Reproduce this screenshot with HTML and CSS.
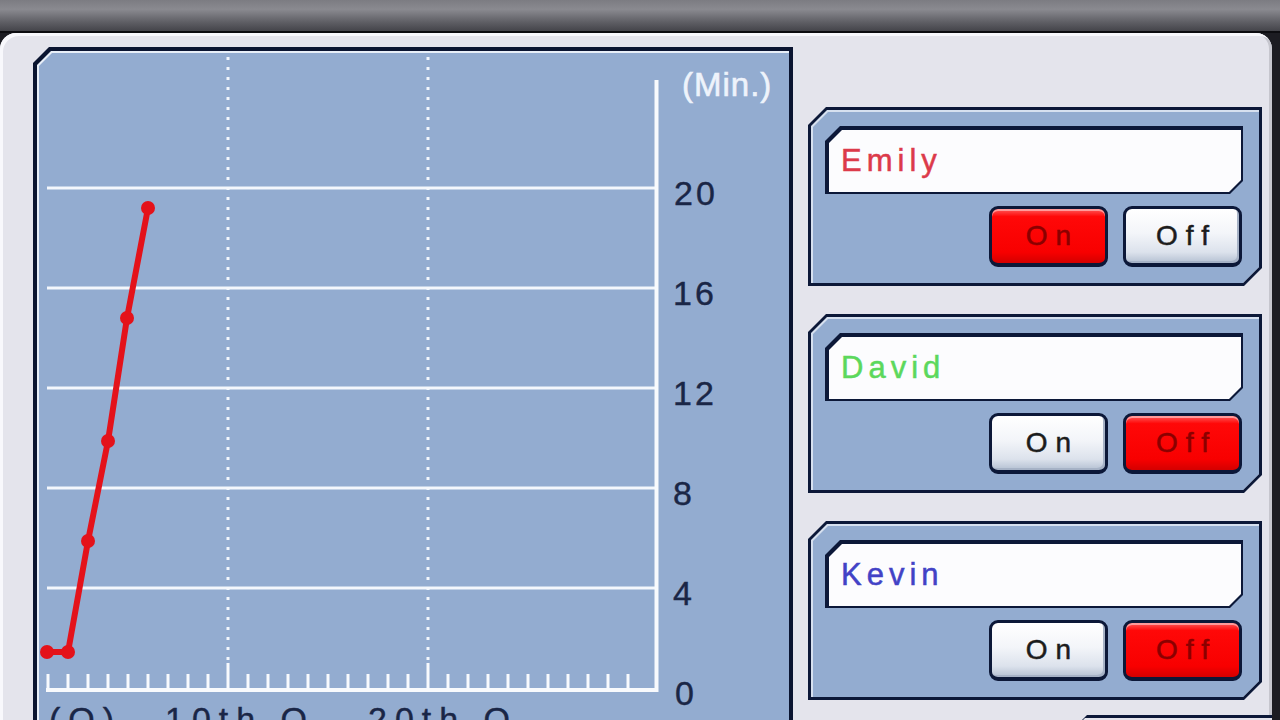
FILE: index.html
```html
<!DOCTYPE html>
<html>
<head>
<meta charset="utf-8">
<link rel="stylesheet" href="styles.css">
</head>
<body>
<div class="titlebar"></div>
<div class="panel">
  <div class="chart">
    <div class="chart-hl">
      <div class="chart-fill">
        <svg class="plot" width="750" height="694" viewBox="39 53 750 694" xmlns="http://www.w3.org/2000/svg">
          <path class="dots" d="M228 57V660M428 57V660"/>
          <path class="grid" d="M47 188H656M47 288H656M47 388H656M47 488H656M47 588H656"/>
          <path class="axis" d="M656.5 80V692M46 690H658"/>
          <path class="tick" d="M48 674V690M68 674V690M88 674V690M108 674V690M128 674V690M148 674V690M168 674V690M188 674V690M208 674V690M248 674V690M268 674V690M288 674V690M308 674V690M328 674V690M348 674V690M368 674V690M388 674V690M408 674V690M448 674V690M468 674V690M488 674V690M508 674V690M528 674V690M548 674V690M568 674V690M588 674V690M608 674V690M628 674V690"/>
          <path class="tick" d="M228 663V690M428 663V690"/>
          <polyline class="series" points="47,652 68,652 88,541 108,441 127,318 148,208"/>
          <g class="pts">
            <circle cx="47" cy="652" r="7"/>
            <circle cx="68" cy="652" r="7"/>
            <circle cx="88" cy="541" r="7"/>
            <circle cx="108" cy="441" r="7"/>
            <circle cx="127" cy="318" r="7"/>
            <circle cx="148" cy="208" r="7"/>
          </g>
          <text class="unit" x="682" y="96">(Min.)</text>
          <text class="ylab" x="674" y="205">20</text>
          <text class="ylab" x="673" y="305">16</text>
          <text class="ylab" x="673" y="405">12</text>
          <text class="ylab" x="673" y="505">8</text>
          <text class="ylab" x="673" y="605">4</text>
          <text class="ylab" x="675" y="705">0</text>
          <text class="xlab" x="49" y="731">(O)</text>
          <text class="xlab" x="165" y="731">10th O</text>
          <text class="xlab" x="368" y="731">20th O</text>
        </svg>
      </div>
    </div>
  </div>

  <div class="side">
    <div class="card">
      <div class="card-hl">
        <div class="card-fill">
          <div class="field"><div class="field-in name-red">Emily</div></div>
          <div class="btns">
            <div class="btn on">On</div>
            <div class="btn off">Off</div>
          </div>
        </div>
      </div>
    </div>
    <div class="card">
      <div class="card-hl">
        <div class="card-fill">
          <div class="field"><div class="field-in name-green">David</div></div>
          <div class="btns">
            <div class="btn off">On</div>
            <div class="btn on">Off</div>
          </div>
        </div>
      </div>
    </div>
    <div class="card">
      <div class="card-hl">
        <div class="card-fill">
          <div class="field"><div class="field-in name-blue">Kevin</div></div>
          <div class="btns">
            <div class="btn off">On</div>
            <div class="btn on">Off</div>
          </div>
        </div>
      </div>
    </div>
    <div class="tab"><div class="tab-in"></div></div>
  </div>
</div>
</body>
</html>
```

FILE: styles.css
```css
html, body {
  margin: 0;
  height: 720px;
  overflow: hidden;
  background: #1c1c22;
  font-family: "Liberation Sans", Arial, sans-serif;
}

.titlebar {
  height: 31px;
  background: linear-gradient(#7c7c82, #8a8a90 30%, #606066 70%, #44444a);
  border-bottom: 2px solid #0c0c10;
}

.panel {
  display: flex;
  align-items: flex-start;
  gap: 15px;
  width: 1272px;
  height: 687px;
  box-sizing: border-box;
  padding: 14px 10px 0 33px;
  background: #e4e4ec;
  border-radius: 16px 16px 0 0;
  box-shadow: inset 3px 3px 0 #f8f8fc, inset -3px 0 0 #c6c6ce;
  overflow: hidden;
}

/* chart panel */
.chart {
  flex: none;
  width: 760px;
  height: 700px;
  box-sizing: border-box;
  padding: 4px;
  background: #0a1430;
  clip-path: polygon(16px 0, 100% 0, 100% 100%, 0 100%, 0 16px);
}
.chart-hl {
  height: 100%;
  box-sizing: border-box;
  padding: 2px 0 0 2px;
  background: #e8eff8;
  clip-path: polygon(14px 0, 100% 0, 100% 100%, 0 100%, 0 14px);
}
.chart-fill {
  height: 100%;
  background: #93acd0;
  clip-path: polygon(13px 0, 100% 0, 100% 100%, 0 100%, 0 13px);
}
.plot { display: block; }
.dots { stroke: #f2f6fc; stroke-width: 3; stroke-dasharray: 3 7; fill: none; }
.grid { stroke: #f4f7fc; stroke-width: 3; fill: none; }
.axis { stroke: #f8fafd; stroke-width: 4; fill: none; }
.tick { stroke: #f8fafd; stroke-width: 3; fill: none; }
.series { stroke: #e4121a; stroke-width: 6; fill: none; stroke-linejoin: round; }
.pts circle { fill: #e4121a; }
.unit {
  font-family: "Liberation Sans", Arial, sans-serif;
  font-size: 33px;
  letter-spacing: 1px;
  fill: #eef3fb;
  stroke: #eef3fb;
  stroke-width: 0.6px;
}
.ylab {
  font-family: "Liberation Sans", Arial, sans-serif;
  font-size: 34px;
  letter-spacing: 3px;
  fill: #1a2646;
  stroke: #1a2646;
  stroke-width: 0.4px;
}
.xlab {
  font-family: "Liberation Sans", Arial, sans-serif;
  font-size: 34px;
  letter-spacing: 8px;
  fill: #1a2646;
  stroke: #1a2646;
  stroke-width: 0.4px;
}

/* right column */
.side {
  flex: none;
  width: 454px;
  margin-top: 60px;
  display: flex;
  flex-direction: column;
  gap: 28px;
}
.card {
  height: 179px;
  box-sizing: border-box;
  padding: 3px;
  background: #0c1838;
  clip-path: polygon(18px 0, 100% 0, 100% calc(100% - 18px), calc(100% - 18px) 100%, 0 100%, 0 18px);
}
.card-hl {
  height: 100%;
  box-sizing: border-box;
  padding: 2px 0 0 2px;
  background: #d6e0ef;
  clip-path: polygon(16px 0, 100% 0, 100% calc(100% - 16px), calc(100% - 16px) 100%, 0 100%, 0 16px);
}
.card-fill {
  height: 100%;
  box-sizing: border-box;
  padding: 14px 16px 16px 12px;
  background: #93acd0;
  display: flex;
  flex-direction: column;
  gap: 12px;
  clip-path: polygon(15px 0, 100% 0, 100% calc(100% - 16px), calc(100% - 16px) 100%, 0 100%, 0 15px);
}
.field {
  height: 68px;
  box-sizing: border-box;
  padding: 4px 2px 2px 4px;
  background: #0c1838;
  clip-path: polygon(15px 0, 100% 0, 100% calc(100% - 13px), calc(100% - 13px) 100%, 0 100%, 0 15px);
}
.field-in {
  height: 100%;
  box-sizing: border-box;
  padding-left: 12px;
  display: flex;
  align-items: center;
  background: #fcfcfe;
  font-size: 31px;
  letter-spacing: 5px;
  -webkit-text-stroke: 0.5px currentColor;
  clip-path: polygon(13px 0, 100% 0, 100% calc(100% - 12px), calc(100% - 12px) 100%, 0 100%, 0 13px);
}
.name-red { color: #dc3a4a; }
.name-green { color: #5cd85c; }
.name-blue { color: #4242c6; }

.btns {
  display: flex;
  justify-content: flex-end;
  gap: 15px;
  margin-right: 1px;
}
.btn {
  width: 119px;
  height: 61px;
  box-sizing: border-box;
  border: 3px solid #0c1838;
  border-bottom-width: 4px;
  border-radius: 9px;
  display: flex;
  align-items: center;
  justify-content: center;
  padding-left: 8px;
  font-size: 28px;
  letter-spacing: 8px;
  -webkit-text-stroke: 0.5px currentColor;
}
.btn.on {
  background: linear-gradient(#ff5a5a, #ff0808 14%, #f80000 80%, #d40000);
  color: #8a0000;
  box-shadow: inset 0 2px 0 #ff9a9a;
}
.btn.off {
  background: linear-gradient(#ffffff, #f3f5f9 45%, #dce2ec 80%, #b4c0d2);
  color: #1c1c1c;
  box-shadow: inset -2px -2px 0 #a6b2c6;
}

.tab {
  align-self: flex-end;
  width: 199px;
  height: 30px;
  margin-top: -13px;
  margin-right: -10px;
  box-sizing: border-box;
  padding-top: 3px;
  background: #0c1838;
  clip-path: polygon(14px 0, 100% 0, 100% 100%, 0 100%, 0 14px);
}
.tab-in {
  height: 100%;
  background: #e4e4ec;
  clip-path: polygon(12px 0, 100% 0, 100% 100%, 0 100%, 0 12px);
}
```
